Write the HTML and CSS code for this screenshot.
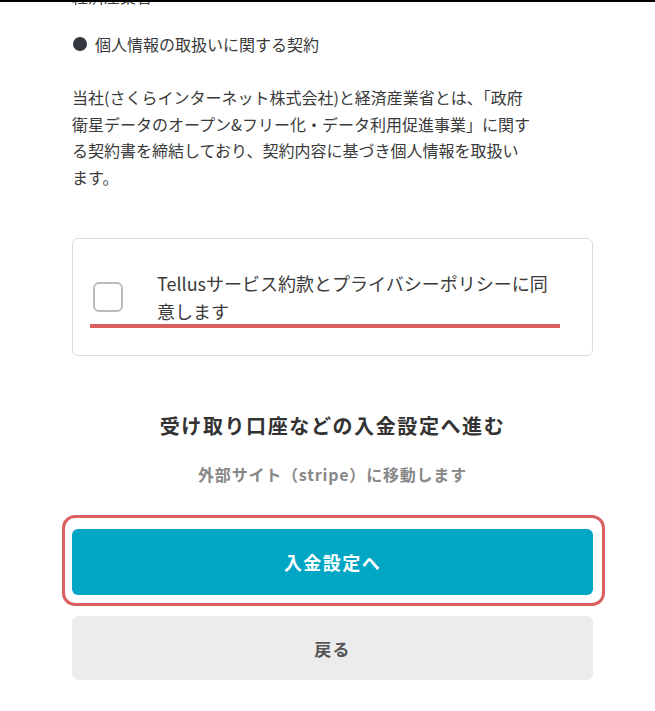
FILE: index.html
```html
<!DOCTYPE html>
<html lang="ja">
<head>
    <meta charset="UTF-8">
    <meta name="viewport" content="width=device-width, initial-scale=1.0">
    <title>入金設定</title>
    <link rel="stylesheet" href="styles.css">
</head>
<body>
    <div class="top-edge"></div>
    <div class="container">
        <p class="text prev">経済産業省</p>
        <h2 class="section-title"><span class="dot"></span>個人情報の取扱いに関する契約</h2>
        <p class="text">当社(さくらインターネット株式会社)と経済産業省とは、「政府衛星データのオープン&amp;フリー化・データ利用促進事業」に関する契約書を締結しており、契約内容に基づき個人情報を取扱います。</p>

        <div class="agree-box">
            <label class="agree-row">
                <span class="checkbox"></span>
                <span class="agree-text">Tellusサービス約款とプライバシーポリシーに同意します</span>
                <span class="mark-line"></span>
            </label>
        </div>

        <h3 class="next-title">受け取り口座などの入金設定へ進む</h3>
        <p class="next-note">外部サイト（stripe）に移動します</p>

        <div class="primary-wrap">
            <button class="btn btn-primary">入金設定へ</button>
            <span class="mark-frame"></span>
        </div>
        <button class="btn btn-back">戻る</button>
    </div>
</body>
</html>
```

FILE: styles.css
```css
body {
    font-family: "Noto Sans CJK JP", "Noto Sans", sans-serif;
    background-color: #ffffff;
    color: #3a3a3a;
    margin: 0;
    padding: 0;
    overflow: hidden;
}
.top-edge {
    position: fixed;
    top: 0;
    left: 0;
    right: 0;
    height: 2px;
    background-color: #000000;
    z-index: 10;
}
.container {
    width: 521px;
    margin-left: 72px;
}
.text {
    width: 462px;
    margin: 0;
    font-size: 16px;
    line-height: 26.4px;
}
.prev {
    margin-top: -17px;
}
.section-title {
    display: flex;
    align-items: center;
    margin: 22px 0 27px;
    font-size: 16px;
    font-weight: normal;
    line-height: 26px;
}
.dot {
    display: inline-block;
    width: 14px;
    height: 14px;
    margin: 0 8px 0 1px;
    border-radius: 50%;
    background-color: #333940;
}
.agree-box {
    margin-top: 48px;
    border: 1px solid #dddddd;
    border-radius: 6px;
    padding: 30px 36px 30px 20px;
}
.agree-row {
    position: relative;
    display: flex;
    align-items: center;
    gap: 34px;
}
.checkbox {
    flex: none;
    width: 26px;
    height: 26px;
    border: 2px solid #bbbbbb;
    border-radius: 6px;
}
.agree-text {
    font-size: 18px;
    line-height: 28px;
}
.mark-line {
    position: absolute;
    left: -3px;
    right: -4px;
    bottom: -3px;
    height: 4px;
    background-color: #d9605f;
}
.next-title {
    margin: 55px 0 0;
    text-align: center;
    font-size: 20px;
    line-height: 30px;
    letter-spacing: 0.08em;
    color: #333333;
}
.next-note {
    margin: 21px 0 43px;
    text-align: center;
    font-size: 16px;
    font-weight: bold;
    line-height: 24px;
    letter-spacing: 0.05em;
    color: #888888;
}
.primary-wrap {
    position: relative;
}
.btn {
    display: block;
    width: 100%;
    border: none;
    border-radius: 6px;
    font-family: inherit;
    font-weight: bold;
    font-size: 17px;
    letter-spacing: 0.08em;
    cursor: pointer;
}
.btn-primary {
    height: 66px;
    background-color: #00a6c3;
    color: #ffffff;
    font-size: 18px;
}
.mark-frame {
    position: absolute;
    top: -14px;
    bottom: -11px;
    left: -10px;
    right: -12px;
    border: 3px solid #d9605f;
    border-radius: 13px;
    pointer-events: none;
}
.btn-back {
    margin-top: 21px;
    height: 64px;
    background-color: #ececec;
    color: #555555;
}
```
